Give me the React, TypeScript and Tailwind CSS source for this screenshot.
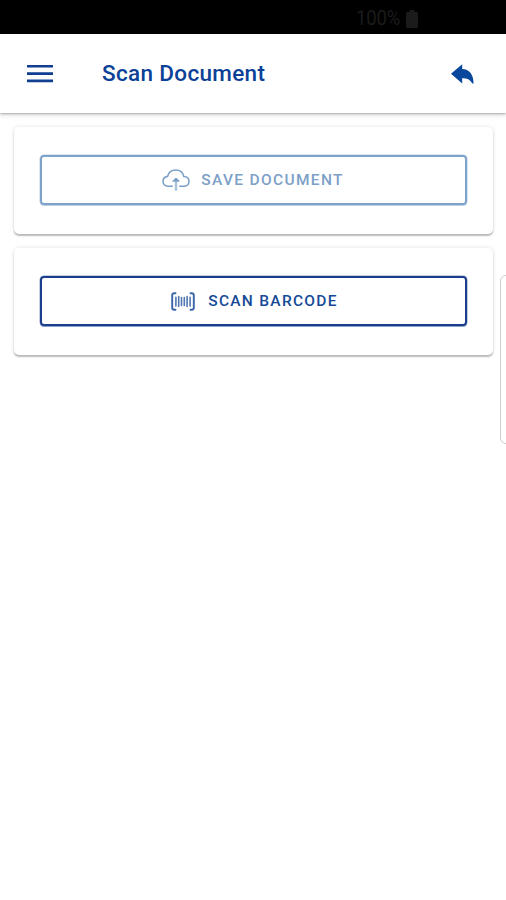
import type { ReactNode } from 'react';

function Card({ children }: { children: ReactNode }) {
  return (
    <section className="h-[107px] rounded-[5px] bg-white px-[26px] pt-7 shadow-[0_2px_1.5px_rgba(0,0,0,0.24),0_0_4px_rgba(0,0,0,0.12)]">
      {children}
    </section>
  );
}

function CloudIcon() {
  return (
    <svg width="28" height="23" viewBox="0 0 28 23" fill="none" stroke="currentColor" strokeWidth="1.6" strokeLinecap="round" strokeLinejoin="round">
      <path d="M10.2 17.2H6.8C3.3 17.2 1 15.1 1 12.4c0-2.7 1.9-4.6 4.6-5C6.5 3.6 9.6 1 13.7 1c4.2 0 7.3 2.6 8.1 6.5 3 .2 5.2 2 5.2 4.7 0 3-2.2 5-5.2 5h-4" />
      <path d="M14 21.8V9.5" strokeWidth="2.4" strokeOpacity="0.65" strokeLinecap="butt" />
      <path d="M10.9 11.9 14 9l3.1 2.9z" fill="currentColor" strokeWidth="1" />
    </svg>
  );
}

function BarcodeIcon() {
  return (
    <svg width="24" height="19" viewBox="0 0 24 19" fill="none" stroke="currentColor" strokeLinecap="round">
      <path d="M4.5 1.2H3.3C2 1.2 1.2 2 1.2 3.2v12.6c0 1.2.8 2 2.1 2h1.2M19.5 1.2h1.2c1.3 0 2.1.8 2.1 2v12.6c0 1.2-.8 2-2.1 2h-1.2" strokeWidth="1.9" strokeOpacity="0.85" />
      <path d="M4.9 5.3v8.6M7.7 4.5v10M10.5 5.5v8M13.3 5.5v8M16.1 4.5v10M19.1 5.3v8.6" strokeWidth="1.6" strokeOpacity="0.75" />
    </svg>
  );
}

export default function App() {
  return (
    <div className="relative flex h-[900px] w-[506px] flex-col overflow-hidden bg-white font-['Roboto',sans-serif]">
      <div className="flex h-[34px] shrink-0 items-center bg-black pt-[3px] pl-[356px] text-[#1b1b1b]">
        <span className="w-[45px] origin-left scale-x-[0.88] text-[21px] leading-none tracking-[-0.2px]">100%</span>
        <svg className="ml-[5px]" width="12" height="18" viewBox="0 0 12 18" fill="currentColor">
          <path d="M3.5 0h5v2H11l1 1v14l-1 1H1l-1-1V3l1-1h2.5z" />
        </svg>
      </div>

      <header className="flex h-[79px] shrink-0 items-center bg-white text-[#0b4196] shadow-[0_1px_2px_rgba(0,0,0,0.28),0_3px_5px_rgba(0,0,0,0.09)]">
        <button aria-label="Menu" className="ml-[27px]">
          <svg width="26" height="19" viewBox="0 0 26 19" fill="none" stroke="#123e92" strokeWidth="2.6">
            <path d="M0 2.3h26M0 9.6h26M0 16.9h26" />
          </svg>
        </button>
        <h1 className="ml-[49px] text-[22.5px] leading-none font-medium tracking-[0.33px]">Scan Document</h1>
        <button aria-label="Back" className="mr-[32px] ml-auto">
          <svg width="23" height="20" viewBox="0 0 23 20" fill="#08479b">
            <path d="M0 9.7 11.2.2V5.1c7 .2 11.3 5.2 11.4 14.5h-1.2c-2.4-4.2-5.4-5.4-10.2-5.4v5.4z" />
          </svg>
        </button>
      </header>

      <main className="flex flex-col gap-[14px] pt-[14px] pr-[13px] pl-[14px]">
        <Card>
          <button className="flex h-[50px] w-full items-center justify-center rounded-[4px] border-2 border-[#7ea3ca] pr-px text-[#7ca0c8] shadow-[0_0_0_0.5px_#b5cce3,0_1px_0_#c1d3e7]">
            <CloudIcon />
            <span className="mt-[2px] ml-[11px] text-[15.5px] leading-none font-medium tracking-[1.33px]">SAVE DOCUMENT</span>
          </button>
        </Card>
        <Card>
          <button className="flex h-[50px] w-full items-center justify-center rounded-[4px] border-2 border-[#1c3d8c] pl-[2px] text-[#164a98] shadow-[0_0_0_0.5px_#8aa0cc,0_1px_0_#8fa3cd]">
            <BarcodeIcon />
            <span className="mt-[2px] ml-[13px] text-[15.5px] leading-none font-medium tracking-[1.28px]">SCAN BARCODE</span>
          </button>
        </Card>
      </main>

      <div className="absolute top-[275px] left-[500px] h-[169px] w-4 rounded-[6px] border border-[#cdcdcd] bg-white" />
    </div>
  );
}
